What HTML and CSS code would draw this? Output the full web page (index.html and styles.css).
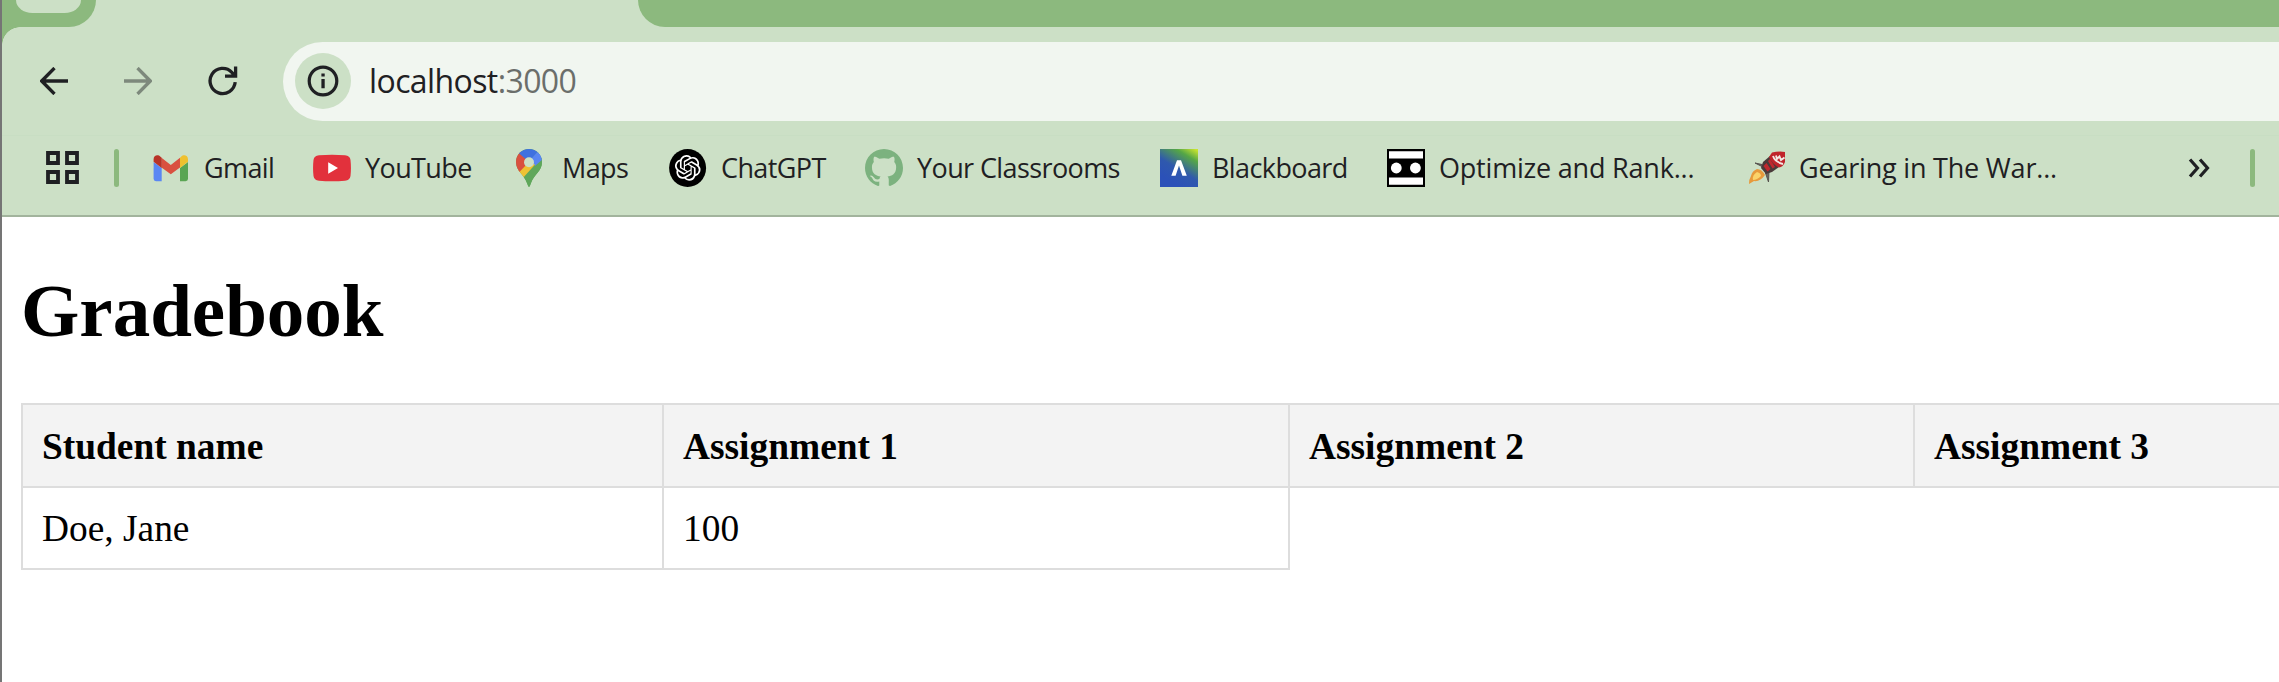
FILE: index.html
```html
<!DOCTYPE html>
<html lang="en">
<head>
<meta charset="utf-8">
<title>Gradebook</title>
<link rel="stylesheet" href="styles.css">
</head>
<body>
<div class="window">
  <div class="tabstrip">
    <div class="strip-left"><span class="tab-search"></span></div>
    <div class="active-tab"></div>
    <div class="strip-right"></div>
  </div>
  <div class="chrome">
    <div class="toolbar">
      <svg class="nav" viewBox="0 0 28 28"><path d="M28 14H2M14.5 1L1.7 14L14.5 27" /></svg>
      <svg class="nav nav-forward" viewBox="0 0 28 28"><path d="M0 14H26M13.5 1L26.3 14L13.5 27" /></svg>
      <svg class="nav nav-reload" viewBox="0 0 30 30"><path d="M27.2 16.2A12.6 12.6 0 1 1 23.8 6.3L27 9.8M27.6 .5V10.2H17" /></svg>
      <div class="address">
        <span class="site-info"><svg viewBox="0 0 32 32"><circle cx="16" cy="16" r="13.8" fill="none" stroke="#1f2023" stroke-width="3.2"/><path d="M14.4 8.4h3.3v3h-3.3zM14.4 14h3.3v9.2h-3.3z" fill="#1f2023"/></svg></span>
        <span class="url">localhost<span class="port">:3000</span></span>
      </div>
    </div>
    <div class="bookmarks">
      <svg class="apps" viewBox="0 0 33 33"><path d="M2 2h10v10H2zM21 2h10v10H21zM2 21h10v10H2zM21 21h10v10H21z"/></svg>
      <span class="divider"></span>
      <div class="links">
        <div class="bookmark gmail">
          <svg viewBox="0 0 38 38"><path d="M1.6 13L9.7 19V32.2H4Q1.6 32.2 1.6 29.8z" fill="#5a87f3"/><path d="M28 19L36 13V29.8Q36 32.2 33.6 32.2H28z" fill="#5aa553"/><path d="M9.5 8.8L18.8 15.9L28 8.8V18.5L18.8 25.2L9.5 18.5z" fill="#d95140"/><path d="M1.6 10.2C1.6 6.4 5.8 4.8 8.5 7.7L9.7 8.8V18.9L1.6 12.8z" fill="#b83327"/><path d="M36 10.2C36 6.4 31.8 4.8 29.1 7.7L28 8.8V18.9L36 12.8z" fill="#efc12f"/></svg>
          <span>Gmail</span></div>
        <div class="bookmark youtube">
          <svg viewBox="0 0 38 38"><path d="M6 6.3Q19 5.2 32 6.3Q37 6.7 37.5 11Q38.4 19 37.5 27Q37 31.2 32 31.7Q19 32.8 6 31.7Q1 31.2.5 27Q-.4 19 .5 11Q1 6.7 6 6.3z" fill="#e2313c"/><path d="M15.2 13.3L25 19L15.2 24.7z" fill="#fff"/></svg>
          <span>YouTube</span></div>
        <div class="bookmark maps">
          <svg viewBox="0 0 38 38"><defs><clipPath id="pin"><path d="M19 0C11.5 0 6 5.8 6 13C6 22 14 25.5 17.2 34.5Q18.3 38 19 38Q19.7 38 20.8 34.5C24 25.5 32 22 32 13C32 5.8 26.5 0 19 0z"/></clipPath></defs><g clip-path="url(#pin)"><path d="M0 0H38V38H0z" fill="#5fa75a"/><path d="M0 29.5L18.5 8.5L28 13L12 31L0 38z" fill="#efc233"/><path d="M0 0H9L19 13L6.5 26L0 24z" fill="#d95140"/><path d="M8.6 4L19 13L30 0H8z" fill="#3f71e0"/><path d="M15 17L30 0L38 6L34 13z" fill="#5986f3"/><path d="M33 7L12 30L20 40H38V7z" fill="#5fa75a"/><path d="M23 9L31.5 3L34 9L25 17z" fill="#5986f3"/></g><circle cx="19" cy="13.2" r="5" fill="#cce0c6"/></svg>
          <span>Maps</span></div>
        <div class="bookmark chatgpt">
          <svg viewBox="0 0 38 38"><ellipse cx="18.6" cy="19" rx="18.5" ry="19" fill="#000"/><g transform="translate(5.9 6) scale(1.07)"><path fill="#fff" d="M22.282 9.821a5.985 5.985 0 0 0-.516-4.91 6.046 6.046 0 0 0-6.51-2.9A6.065 6.065 0 0 0 4.981 4.18a5.985 5.985 0 0 0-3.998 2.9 6.046 6.046 0 0 0 .743 7.097 5.98 5.98 0 0 0 .51 4.911 6.051 6.051 0 0 0 6.515 2.9A5.985 5.985 0 0 0 13.26 24a6.056 6.056 0 0 0 5.772-4.206 5.99 5.99 0 0 0 3.997-2.9 6.056 6.056 0 0 0-.747-7.073zM13.26 22.43a4.476 4.476 0 0 1-2.876-1.04l.141-.081 4.779-2.758a.795.795 0 0 0 .392-.681v-6.737l2.02 1.168a.071.071 0 0 1 .038.052v5.583a4.504 4.504 0 0 1-4.494 4.494zM3.6 18.304a4.47 4.47 0 0 1-.535-3.014l.142.085 4.783 2.759a.771.771 0 0 0 .78 0l5.843-3.369v2.332a.08.08 0 0 1-.033.062L9.74 19.95a4.5 4.5 0 0 1-6.14-1.646zM2.34 7.896a4.485 4.485 0 0 1 2.366-1.973V11.6a.766.766 0 0 0 .388.676l5.815 3.355-2.02 1.168a.076.076 0 0 1-.071 0l-4.83-2.786A4.504 4.504 0 0 1 2.34 7.872zm16.597 3.855l-5.833-3.387L15.119 7.2a.076.076 0 0 1 .071 0l4.83 2.791a4.494 4.494 0 0 1-.676 8.105v-5.678a.79.79 0 0 0-.407-.667zm2.01-3.023l-.141-.085-4.774-2.782a.776.776 0 0 0-.785 0L9.409 9.23V6.897a.066.066 0 0 1 .028-.061l4.83-2.787a4.5 4.5 0 0 1 6.68 4.66zm-12.64 4.135l-2.02-1.164a.08.08 0 0 1-.038-.057V6.075a4.5 4.5 0 0 1 7.375-3.453l-.142.08-4.778 2.758a.795.795 0 0 0-.393.681zm1.097-2.365l2.602-1.5 2.607 1.5v2.999l-2.597 1.5-2.607-1.5z"/></g></svg>
          <span>ChatGPT</span></div>
        <div class="bookmark classrooms">
          <svg viewBox="0 0 24 24"><path fill="#7cb27f" d="M12 0C5.37 0 0 5.37 0 12c0 5.31 3.435 9.795 8.205 11.385.6.105.825-.255.825-.57 0-.285-.015-1.23-.015-2.235-3.015.555-3.795-.735-4.035-1.41-.135-.345-.72-1.41-1.23-1.695-.42-.225-1.02-.78-.015-.795.945-.015 1.62.87 1.845 1.23 1.08 1.815 2.805 1.305 3.495.99.105-.78.42-1.305.765-1.605-2.67-.3-5.46-1.335-5.46-5.925 0-1.305.465-2.385 1.23-3.225-.12-.3-.54-1.53.12-3.18 0 0 1.005-.315 3.3 1.23.96-.27 1.98-.405 3-.405s2.04.135 3 .405c2.295-1.56 3.3-1.23 3.3-1.23.66 1.65.24 2.88.12 3.18.765.84 1.23 1.905 1.23 3.225 0 4.605-2.805 5.625-5.475 5.925.435.375.81 1.095.81 2.22 0 1.605-.015 2.895-.015 3.3 0 .315.225.69.825.57A12.02 12.02 0 0 0 24 12c0-6.63-5.37-12-12-12z"/></svg>
          <span>Your Classrooms</span></div>
        <div class="bookmark blackboard">
          <svg viewBox="0 0 38 38"><defs><linearGradient id="bb" x1=".3" y1=".85" x2=".85" y2="-.05"><stop offset="0" stop-color="#2b51b8"/><stop offset=".35" stop-color="#2f59ad"/><stop offset=".75" stop-color="#55a646"/><stop offset="1" stop-color="#c8e52e"/></linearGradient></defs><path d="M0 0H38V38H0z" fill="url(#bb)"/><path d="M11.3 26.8L17 11.2H21L26.8 26.8H22.4L19 16.4L15.6 26.8z" fill="#fff"/></svg>
          <span>Blackboard</span></div>
        <div class="bookmark optimize">
          <svg viewBox="0 0 38 38"><path d="M0 0H38V38H0z"/><path d="M2 2.3H36V9.5H2zM2 28.5H36V35.7H2z" fill="#fff"/><circle cx="9.3" cy="19" r="5.4" fill="#fff"/><circle cx="28.4" cy="19" r="5.4" fill="#fff"/></svg>
          <span>Optimize and Rank...</span></div>
        <div class="bookmark gearing">
          <svg viewBox="0 0 38 38"><path d="M15 18L7 14L14 15.5zM21 22L20.5 33L17.5 24z" fill="#6a6660" stroke="#55524e" stroke-width="1"/><path d="M9 20Q14 20 17 26Q12 33 6 32L1 35Q1 30 3 27Q4 22 9 20z" fill="#e79a3c"/><path d="M9 23Q13 24 13 27Q9 31 5 31Q4 26 9 23z" fill="#fbd36a"/><path d="M15 13L22 7L31 18L24 23L18 25L13 19z" fill="#4a3a39"/><path d="M15.5 17L18.5 14L22.5 20L19.5 22.5zM20 12L22 10L27 18L24.5 19.5z" fill="#c0282e"/><path d="M21 8L24 3.5Q31 2 37 3V13Q35 18 31 18.5Q24 15 21 8z" fill="#c0242b"/><path d="M25 7Q27 13 35 15M28 6.5L29 10L31.5 7.5L33 11L36.5 8.5" fill="none" stroke="#f2e8e4" stroke-width="1.9"/></svg>
          <span>Gearing in The War...</span></div>
      </div>
      <svg class="more" viewBox="0 0 22 20"><path d="M2 1.5L9.5 10L2 18.5M12 1.5L19.5 10L12 18.5"/></svg>
      <span class="divider divider-end"></span>
    </div>
  </div>
  <main class="page">
    <h1>Gradebook</h1>
    <table class="grades">
      <colgroup><col class="col-name"><col class="col-first"><col class="col-second"><col class="col-third"></colgroup>
      <thead><tr><th>Student name</th><th>Assignment 1</th><th>Assignment 2</th><th>Assignment 3</th></tr></thead>
      <tbody><tr><td>Doe, Jane</td><td>100</td></tr></tbody>
    </table>
  </main>
</div>
</body>
</html>
```

FILE: styles.css
```css
* { box-sizing: border-box; }
body { margin: 0; background: #fff; }
svg { display: block; flex: none; }

.window {
  height: 682px;
  border-left: 2px solid #757575;
  overflow: hidden;
}

/* tab strip */
.tabstrip { display: flex; height: 27px; background: #cce0c6; }
.strip-left {
  width: 94px;
  background: #8cb97e;
  border-bottom-right-radius: 27px;
  padding-left: 14px;
}
.tab-search {
  display: block;
  width: 65px;
  height: 13px;
  background: #cce0c6;
  border-radius: 0 0 24px 24px / 0 0 19px 19px;
}
.active-tab { width: 542px; }
.strip-right {
  flex: 1;
  background: #8cb97e;
  border-bottom-left-radius: 27px;
}

/* toolbar and bookmarks */
.chrome {
  height: 190px;
  background: radial-gradient(circle at 18px 18px, transparent 17.5px, #8cb97e 18px) 0 0 / 18px 18px no-repeat #cce0c6;
  border-bottom: 2px solid #a2b49d;
}
.toolbar {
  display: flex;
  align-items: center;
  height: 108px;
  padding-left: 38px;
}
.nav {
  width: 28px;
  height: 28px;
  fill: none;
  stroke: #1f2023;
  stroke-width: 3.3;
}
.nav-forward { margin-left: 56px; opacity: .45; }
.nav-reload { width: 30px; height: 30px; margin-left: 56px; }
.address {
  display: flex;
  align-items: center;
  flex: 1;
  height: 79px;
  margin-left: 45px;
  padding-left: 12px;
  background: #f1f6f0;
  border-radius: 40px 0 0 40px;
}
.site-info {
  display: flex;
  align-items: center;
  justify-content: center;
  width: 56px;
  height: 56px;
  border-radius: 50%;
  background: #cce0c6;
}
.site-info svg { width: 32px; height: 32px; }
.url {
  margin-left: 18px;
  font: 32px/44px "Open Sans", "Noto Sans", sans-serif;
  letter-spacing: -.6px;
  color: #1f2023;
}
.port { color: #6b6e6b; }

.bookmarks {
  display: flex;
  align-items: center;
  height: 80px;
  padding-left: 44px;
  padding-bottom: 16px;
  border-top: 1px solid #c8dec3;
}
.apps {
  width: 33px;
  height: 33px;
  fill: none;
  stroke: #1f2023;
  stroke-width: 3.8;
}
.divider {
  width: 5px;
  height: 38px;
  margin-left: 35px;
  border-radius: 3px;
  background: #8cb97e;
}
.links { display: flex; margin-left: 33px; }
.bookmark {
  display: flex;
  align-items: center;
  gap: 14px;
  white-space: nowrap;
  font: 27px/38px "Open Sans", "Noto Sans", sans-serif;
  letter-spacing: -.6px;
  color: #1f2023;
}
.bookmark svg { width: 38px; height: 38px; }
.gmail { width: 161px; }
.youtube { width: 197px; }
.maps { width: 159px; }
.chatgpt { width: 196px; }
.classrooms { width: 295px; }
.blackboard { width: 227px; }
.optimize { width: 361px; letter-spacing: -.2px; }
.gearing { width: 340px; gap: 13px; letter-spacing: -.2px; }
.more {
  width: 22px;
  height: 20px;
  margin-left: 100px;
  fill: none;
  stroke: #1f2023;
  stroke-width: 3.2;
}
.divider-end { margin-left: 40px; }

/* page content */
.page {
  padding: 51px 0 0 19px;
  font-family: "Liberation Serif", "Times New Roman", serif;
  color: #000;
}
h1 { margin: 0 0 49px; font-size: 75px; line-height: 86px; }
.grades {
  width: 2518px;
  table-layout: fixed;
  border-collapse: collapse;
  font-size: 37.4px;
  line-height: 43px;
}
.col-name { width: 641px; }
.col-first { width: 626px; }
.col-second { width: 625px; }
.col-third { width: 626px; }
.grades th, .grades td {
  height: 82px;
  padding: 0 19px;
  border: 2px solid #ddd;
  text-align: left;
}
.grades th { height: 83px; padding-top: 1px; background: #f3f3f3; }
```
